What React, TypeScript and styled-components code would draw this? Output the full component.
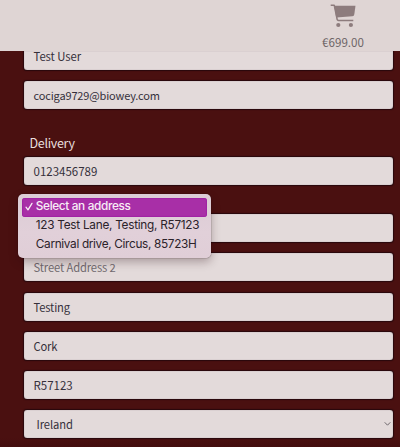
import React from "react";
import styled, { createGlobalStyle } from "styled-components";

const Global = createGlobalStyle`
  * { box-sizing: border-box; }
  body {
    margin: 0;
    background: #4a1010;
    overflow: hidden;
    font-family: "Noto Sans CJK SC", "Noto Sans", sans-serif;
  }
`;

const Page = styled.div`
  height: 447px;
  display: flex;
  flex-direction: column;
  overflow: hidden;
  background: linear-gradient(#4a1010 0, #4a1010 438px, #430d0e 447px);
`;

const Header = styled.header`
  flex: none;
  height: 51px;
  padding: 4px 0 0 286px;
  display: flex;
  flex-direction: column;
  align-items: center;
  background: #dfd5d4;
`;

const Total = styled.span`
  margin-top: 7px;
  font-size: 11.6px;
  line-height: 14px;
  color: #6e6567;
`;

const Form = styled.main`
  padding: 0 7px 0 24px;
`;

const Group = styled.section`
  display: flex;
  flex-direction: column;
  gap: 11.2px;
`;

const Field = styled.div<{ $muted?: boolean; $clipped?: boolean; $indent?: number }>`
  height: ${(p) => (p.$clipped ? 19 : 28)}px;
  padding: 0 2px 0 ${(p) => 9.5 + (p.$indent ?? 0)}px;
  display: flex;
  align-items: ${(p) => (p.$clipped ? "flex-start" : "center")};
  justify-content: space-between;
  border-radius: ${(p) => (p.$clipped ? "0 0 3px 3px" : "3px")};
  background: #e3dada;
  box-shadow: 0 0 1px 0.5px #29080d, inset 0 0 1px #8a7c80;
  clip-path: ${(p) => (p.$clipped ? "inset(0 -2px -2px -2px)" : "none")};
  color: ${(p) => (p.$muted ? "#716b70" : "#35303a")};
`;

const Value = styled.span<{ $size?: number; $spacing?: number; $up?: number }>`
  font-size: ${(p) => p.$size ?? 11.5}px;
  line-height: 16px;
  letter-spacing: ${(p) => p.$spacing ?? 0}px;
  margin-top: ${(p) => -(p.$up ?? 0)}px;
  white-space: nowrap;
`;

const Heading = styled.h2`
  margin: 25px 0 6px 5.5px;
  font-size: 12.5px;
  line-height: 17px;
  font-weight: 400;
  letter-spacing: -0.3px;
  color: #e8dedd;
`;

const SelectSlot = styled.div`
  position: relative;
  height: 29px;
`;

const Menu = styled.ul`
  position: absolute;
  z-index: 2;
  top: 8.5px;
  left: -6px;
  width: 193px;
  height: 64px;
  margin: 0;
  padding: 4px;
  list-style: none;
  border-radius: 5px;
  background: linear-gradient(#dbccd5, #e1d0d9 60%, #e0ced7);
  box-shadow: 0 0 1px #170708, 0 4px 10px rgba(40, 10, 15, 0.3);
  font-family: Inter, sans-serif;
  font-size: 11.8px;
`;

const Option = styled.li<{ $selected?: boolean; $spacing: number }>`
  height: 19px;
  padding-bottom: 2px;
  display: flex;
  align-items: center;
  border-radius: 3px;
  background: ${(p) => (p.$selected ? "#a82fa7" : "transparent")};
  box-shadow: ${(p) => (p.$selected ? "inset 0 0 1px 0.5px #9818a0" : "none")};
  color: ${(p) => (p.$selected ? "#f8edf6" : "#2b222a")};
  font-weight: ${(p) => (p.$selected ? 500 : 400)};
  letter-spacing: ${(p) => p.$spacing}px;
  white-space: nowrap;
`;

const Mark = styled.span`
  width: 13.8px;
  flex: none;
  display: flex;
  padding: 1px 0 0 3px;
`;

const Cart = () => (
  <svg width="26" height="24" viewBox="0 0 26 24" fill="none">
    <path d="M4.2 1.7h21.3l-1.2 8.6c-.2 1.3-.8 1.9-2 2L6.2 13.6z" fill="#8d7c7d" />
    <path d="M.7 1.2h3.5l2.6 12.3c.1 2 .6 3 1.8 3h14.7" stroke="#8d7c7d" strokeWidth="1.5" strokeLinejoin="round" />
    <circle cx="8.3" cy="21" r="2.1" fill="#8d7c7d" />
    <circle cx="20.9" cy="21" r="2.1" fill="#8d7c7d" />
  </svg>
);

const Check = () => (
  <svg width="8" height="9" viewBox="0 0 8 9" fill="none">
    <path d="M1 5.2 3 7.8 7 1.4" stroke="#f8edf6" strokeWidth="1.3" strokeLinecap="round" strokeLinejoin="round" />
  </svg>
);

const Chevron = () => (
  <svg width="7" height="6" viewBox="0 0 7 6" fill="none">
    <path d="M.7 1.3 3.5 4.2 6.3 1.3" stroke="#6f686d" strokeWidth="1" />
  </svg>
);

const options = [
  { label: "Select an address", selected: true, spacing: -0.35 },
  { label: "123 Test Lane, Testing, R57123", spacing: -0.27 },
  { label: "Carnival drive, Circus, 85723H", spacing: -0.33 },
];

export default function App() {
  return (
    <>
      <Global />
      <Page>
        <Header>
          <Cart />
          <Total>€699.00</Total>
        </Header>
        <Form>
          <Group>
            <Field $clipped><Value $up={3} $size={11.3} $spacing={-0.05}>Test User</Value></Field>
            <Field><Value $size={11} $spacing={-0.15}>cociga9729@biowey.com</Value></Field>
          </Group>
          <Heading>Delivery</Heading>
          <Field><Value>0123456789</Value></Field>
          <SelectSlot>
            <Menu>
              {options.map((o) => (
                <Option key={o.label} $selected={o.selected} $spacing={o.spacing}>
                  <Mark>{o.selected && <Check />}</Mark>
                  {o.label}
                </Option>
              ))}
            </Menu>
          </SelectSlot>
          <Group>
            <Field />
            <Field $muted><Value $size={11.2} $spacing={-0.12}>Street Address 2</Value></Field>
            <Field><Value $size={11.2} $spacing={-0.15}>Testing</Value></Field>
            <Field><Value $size={11.2} $spacing={-0.15}>Cork</Value></Field>
            <Field><Value>R57123</Value></Field>
            <Field $indent={3}>
              <Value $size={11.2} $spacing={-0.1}>Ireland</Value>
              <Chevron />
            </Field>
          </Group>
        </Form>
      </Page>
    </>
  );
}
